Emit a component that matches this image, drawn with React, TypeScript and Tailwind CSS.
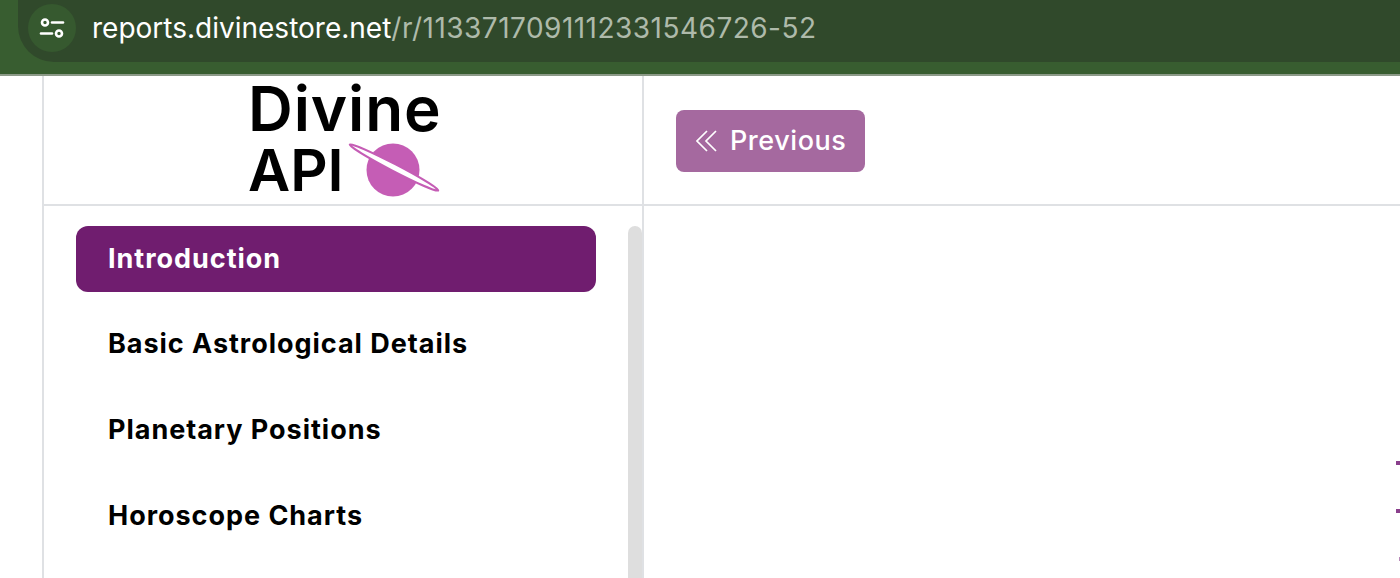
import React from "react";

const items = ["Basic Astrological Details", "Planetary Positions", "Horoscope Charts"];

function TuneIcon() {
  return (
    <svg width="26" height="22" viewBox="0 0 26 22" fill="none" stroke="#fff" strokeWidth="2.6" strokeLinecap="round">
      <circle cx="6" cy="5.5" r="3" />
      <path d="M13 5.5h11" />
      <path d="M2 16.5h11" />
      <circle cx="20" cy="16.5" r="3" />
    </svg>
  );
}

function Planet() {
  return (
    <svg width="94" height="56" viewBox="0 0 94 56" fill="none" className="ml-[5px] overflow-visible">
      <circle cx="46" cy="28" r="26.5" fill="#c55db5" />
      <ellipse cx="47" cy="25.5" rx="50" ry="3.4" fill="#fff" stroke="#c55db5" strokeWidth="2" transform="rotate(27.5 47 25.5)" />
    </svg>
  );
}

export default function App() {
  return (
    <div className="relative flex h-[578px] w-[1400px] flex-col overflow-hidden bg-white font-['Inter',sans-serif]">
      <div className="h-[74px] shrink-0 bg-[#385d30] pl-[18px]">
        <div className="flex h-[62px] items-start rounded-bl-[36px] bg-[#30492b] pl-[10px] pt-[4px]">
          <div className="flex h-[48px] w-[48px] items-center justify-center rounded-full bg-[#36592f]">
            <TuneIcon />
          </div>
          <div className="ml-[16px] whitespace-nowrap text-[28px] leading-[48px] text-white">
            reports.divinestore.net<span className="tracking-[0.48px] text-[#aebaaa]">/r/1133717091112331546726-52</span>
          </div>
        </div>
      </div>
      <div className="h-[2px] shrink-0 bg-[#8c9a88]" />
      <div className="ml-[42px] grid min-h-0 flex-1 grid-cols-[602px_1fr] grid-rows-[130px_1fr]">
        <div className="flex flex-col items-start border-r-2 border-b-2 border-l-2 border-[#dfe1e4] pl-[204px]">
          <div className="h-[66px] text-[62px] font-semibold leading-[66px] tracking-[0.9px] text-black">Divine</div>
          <div className="flex h-[56px] items-center">
            <span className="w-[94px] text-[58px] font-semibold leading-[56px] text-black">API</span>
            <Planet />
          </div>
        </div>
        <div className="flex items-start border-b-2 border-[#dfe1e4] pl-[32px] pt-[34px]">
          <button className="flex h-[62px] w-[189px] items-center rounded-[8px] bg-[#a5699f] pl-[20px] text-[27px] font-medium text-white">
            <svg width="21" height="22" viewBox="0 0 21 22" fill="none" stroke="#fff" strokeWidth="1.7">
              <path d="M11 1 1 11l10 10" />
              <path d="M20 1 10 11l10 10" />
            </svg>
            <span className="ml-[13px] tracking-[0.55px]">Previous</span>
          </button>
        </div>
        <div className="flex min-h-0 justify-between overflow-hidden border-r-2 border-l-2 border-[#dfe1e4] pl-[32px] pt-[20px]">
          <nav className="flex w-[520px] flex-col gap-[19.7px]">
            <div className="flex h-[66px] items-center rounded-[12px] bg-[#701d6f] pl-[32px] text-[27px] font-bold tracking-[0.97px] text-white">
              Introduction
            </div>
            {items.map((t) => (
              <div key={t} className="flex h-[66px] items-center pl-[32px] text-[27px] font-bold tracking-[0.97px] text-black">
                {t}
              </div>
            ))}
          </nav>
          <div className="h-[400px] w-[14px] rounded-t-[7px] bg-[#dedede]" />
        </div>
        <div />
      </div>
      <div className="absolute left-[1396px] top-[461px] h-[4px] w-[4px] bg-[#8a3f8c]" />
      <div className="absolute left-[1396px] top-[509px] h-[4px] w-[4px] bg-[#8a3f8c]" />
      <div className="absolute left-[1399px] top-[557px] h-[4px] w-[1px] bg-[#b98ab9]" />
    </div>
  );
}
